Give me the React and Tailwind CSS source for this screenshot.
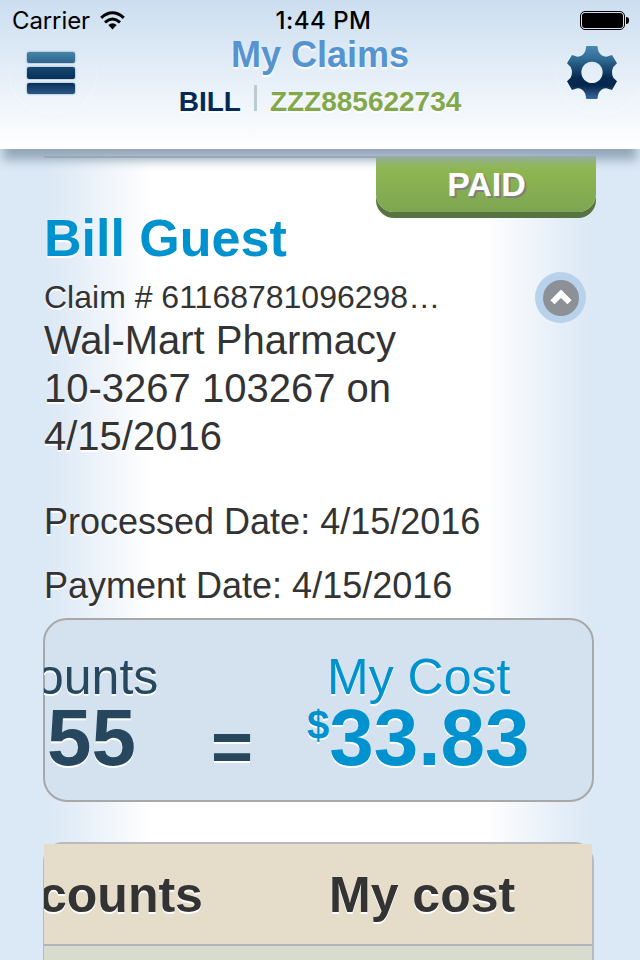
import { ChevronUp } from "lucide-react";

const textGlow = "[text-shadow:0_2px_0_#ffffff]";

// iOS status bar
const StatusBar = () => (
  <div className="grid h-10 grid-cols-3 items-center pt-px text-black font-['Inter',sans-serif] text-[24px] leading-10">
    <div className="flex items-center pl-3">
      <span className="tracking-[-0.1px]">Carrier</span>
      <svg viewBox="0 0 25 19" className="-mt-[2px] ml-[10px] h-[19px] w-[25px]">
        <g fill="none" stroke="#000" strokeWidth="3">
          <path d="M1.2 6.8 Q12.5 -3.2 23.8 6.8" />
          <path d="M5 11.3 Q12.5 4.7 20 11.3" />
        </g>
        <path d="M8.3 14 Q12.5 10.6 16.7 14 L12.5 18.4 Z" />
      </svg>
    </div>
    <div className="whitespace-nowrap text-center font-medium tracking-[0.5px] pl-[7px]">1:44 PM</div>
    <div className="-mt-[2px] flex items-center justify-end pr-[11px]">
      <div className="h-[19px] w-[45px] rounded-[5px] border border-black p-px">
        <div className="h-full w-full rounded-[3px] bg-black" />
      </div>
      <div className="ml-px h-[7px] w-[3px] rounded-r-full bg-black" />
    </div>
  </div>
);

const MenuIcon = () => (
  <div className="flex w-12 flex-col gap-[4px]">
    <div className="h-[11.5px] rounded-[2px] bg-linear-to-b from-[#4583a8] to-[#2f658f] shadow-[0_0_2px_#5f8bad]" />
    <div className="h-[11.5px] rounded-[2px] bg-linear-to-b from-[#17486e] to-[#06305a] shadow-[0_0_2px_#5f8bad]" />
    <div className="h-[11.5px] rounded-[2px] bg-linear-to-b from-[#0b3159] to-[#2b5587] shadow-[0_0_2px_#5f8bad]" />
  </div>
);

const GearIcon = () => (
  <svg viewBox="738 136 156 165" className="h-[55px] w-[52px]">
    <defs>
      <linearGradient id="gear" x1="0" y1="0" x2="0" y2="1">
        <stop offset="0" stopColor="#4a88b0" />
        <stop offset="0.25" stopColor="#2f6a93" />
        <stop offset="0.6" stopColor="#06294f" />
        <stop offset="0.75" stopColor="#07284f" />
        <stop offset="1" stopColor="#37699c" />
      </linearGradient>
    </defs>
    <path
      fill="url(#gear)"
      fillRule="evenodd"
      d="M799 139 H832 L835 154 Q842 171 859 171 L876 166 L891 191 L880 202 Q872 218 880 234 L891 245 L876 271 L859 266 Q842 266 835 283 L832 298 H799 L796 283 Q789 266 772 266 L756 271 L741 245 L752 234 Q760 218 752 202 L741 191 L756 166 L772 171 Q789 171 796 154 Z M816 186 A32 32 0 1 0 816 250 A32 32 0 1 0 816 186 Z"
    />
  </svg>
);

// Buttons only catch light along their lower rim
const rim = "rounded-full shadow-[0_1px_0_#f7fafd]";

const Header = () => (
  <header className="relative z-10 h-[149px] shrink-0 bg-linear-to-b from-[#cbdef0] to-white shadow-[0_14px_10px_-3px_#94a8bb]">
    <StatusBar />
    <div className="-mt-2 flex justify-between">
      <button className={`ml-[9px] flex h-[81px] w-[88px] items-center justify-center pr-[4px] pt-px ${rim}`}>
        <MenuIcon />
      </button>
      <div className="-ml-[13px] pt-[2px] text-center font-bold">
        <h1 className="text-[36px] leading-[42px] text-[#5594d0] [text-shadow:0_2px_2px_#ffffff]">
          My Claims
        </h1>
        <div className="mt-[8px] flex h-9 items-center text-[28px] leading-9">
          <span className={`text-[#002a55] ${textGlow}`}>BILL</span>
          <span className="mx-[13px] -mt-[8px] h-[26px] w-[3px] bg-[#bccad4]" />
          <span className={`text-[#83a84c] ${textGlow}`}>ZZZ885622734</span>
        </div>
      </div>
      <button className={`-mr-1 flex h-[81px] w-[88px] items-center justify-center pr-[17px] ${rim}`}>
        <GearIcon />
      </button>
    </div>
  </header>
);

const CostSummary = () => (
  <div className="-ml-px h-[184px] w-[551px] shrink-0 rounded-3xl border-2 border-[#a8a8a8] bg-[#d3e2ee]">
    <div className="-ml-px flex h-[180px] items-start overflow-hidden pt-[32px]">
      <div className={`-ml-[8px] w-[138px] shrink-0 text-[#27475f] ${textGlow}`}>
        <div className="text-[50px] leading-[51px]">ounts</div>
        <div className="-mt-[5px] pl-[11px] text-[80px] font-bold leading-20">55</div>
      </div>
      <div className={`ml-[37px] mt-[54px] w-[47px] text-[72px] font-bold leading-20 text-[#27475f] ${textGlow}`}>
        =
      </div>
      <div className={`ml-[49px] text-[#0092cf] ${textGlow}`}>
        <div className="pl-[20px] text-[50px] leading-[51px]">My Cost</div>
        <div className="-mt-[5px] flex font-bold">
          <span className="text-[40px] leading-[54px]">$</span>
          <span className="text-[80px] leading-20">33.83</span>
        </div>
      </div>
    </div>
  </div>
);

const CostTable = () => (
  <div className="-ml-px mt-10 h-[200px] w-[551px] shrink-0 rounded-t-[20px] border-2 border-[#b8babd]">
    <div className="-ml-px h-[200px] w-[548px] overflow-hidden bg-[#d8dccf]">
      <div
        className={`flex h-[102px] border-b-2 border-[#b1b5b9] bg-[#e5dcca] pt-px text-[50px] font-bold leading-[100px] text-[#333333] ${textGlow}`}
      >
        <span className="-ml-[5px] w-[290px]">counts</span>
        <span>My cost</span>
      </div>
    </div>
  </div>
);

const App = () => {
  return (
    <div className="flex h-[960px] w-[640px] flex-col overflow-hidden bg-[#dbe8f5] font-['Liberation_Sans',Arial,sans-serif]">
      <Header />
      <main className="ml-11 flex w-[552px] flex-1 flex-col bg-[linear-gradient(90deg,#dbe8f5_0px,#dfeaf6_15px,#ffffff_108px,#ffffff_440px,#dfeaf6_535px,#dbe8f5_552px)] pt-[7px] text-[#333333]">
        <div className="h-[2px] shrink-0 bg-[#a8a8a8]" />
        <div className="-mt-px flex h-[61px] shrink-0 justify-end">
          <div className="h-[55px] w-[220px] rounded-b-[18px] bg-linear-to-b from-[#94bb50] to-[#7da551] pl-px text-center text-[34px] font-bold leading-[54px] text-white shadow-[0_6px_0_#577440] [text-shadow:2px_2px_0_#808080]">
            PAID
          </div>
        </div>

        {/* Claim details */}
        <h2 className={`text-[52px] font-bold leading-10 text-[#0092cf] ${textGlow}`}>Bill Guest</h2>
        <div className="mt-[20px] flex h-[39px] items-center justify-between pr-[10px]">
          <span className={`text-[32px] leading-[39px] ${textGlow}`}>Claim # 61168781096298…</span>
          <button className="flex size-[51px] shrink-0 items-center justify-center rounded-full bg-[#b9d2ec]">
            <span className="flex size-9 items-center justify-center rounded-full bg-[#8b9196] text-white">
              <ChevronUp size={34} strokeWidth={4.2} strokeLinecap="butt" strokeLinejoin="miter" />
            </span>
          </button>
        </div>
        <p className={`-mt-px w-[400px] text-[40px] leading-12 ${textGlow}`}>
          Wal-Mart Pharmacy 10-3267 103267 on 4/15/2016
        </p>
        <div className={`mt-[30px] text-[36px] leading-16 ${textGlow}`}>
          <p>Processed Date: 4/15/2016</p>
          <p>Payment Date: 4/15/2016</p>
        </div>

        <CostSummary />
        <CostTable />
      </main>
    </div>
  );
};

export default App;
